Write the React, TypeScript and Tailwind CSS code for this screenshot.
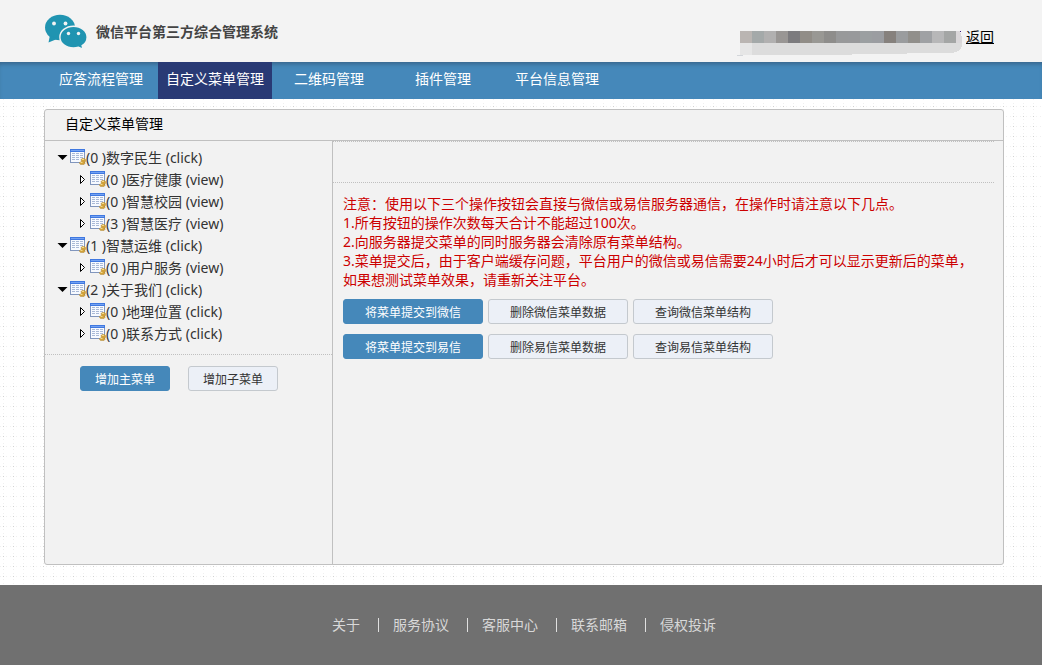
import React from 'react'
import clsx from 'clsx'

const navItems = ['应答流程管理', '自定义菜单管理', '二维码管理', '插件管理', '平台信息管理']

const menus = [
  {
    name: '(0 )数字民生 (click)',
    children: ['(0 )医疗健康 (view)', '(0 )智慧校园 (view)', '(3 )智慧医疗 (view)'],
  },
  { name: '(1 )智慧运维 (click)', children: ['(0 )用户服务 (view)'] },
  { name: '(2 )关于我们 (click)', children: ['(0 )地理位置 (click)', '(0 )联系方式 (click)'] },
]

const actions = [
  ['将菜单提交到微信', '删除微信菜单数据', '查询微信菜单结构'],
  ['将菜单提交到易信', '删除易信菜单数据', '查询易信菜单结构'],
]

const footerLinks = ['关于', '服务协议', '客服中心', '联系邮箱', '侵权投诉']

const maskColors = [
  '#bab5b2', '#a4a9a9', '#b1b0b0', '#999694', '#7c7b7e', '#918d87',
  '#999894', '#8e8d8b', '#98999a', '#98999b', '#9b9fa1', '#9b9da1',
  '#86817d', '#9a9c9e', '#918f8b', '#9fa1a4', '#b7b7b8', '#a4a6a5',
]

function Logo() {
  return (
    <svg width="44" height="36" viewBox="0 0 44 36" className="shrink-0">
      <g fill="#2094b1">
        <ellipse cx="16" cy="13.5" rx="15" ry="12.8" />
        <path d="M6 21 L4.5 28.5 L13 25 Z" />
      </g>
      <path
        d="M29.5 12.2c7.6 0 13.6 4.9 13.6 11 0 3.600-2 6.600-5 8.400l.9 3.600-4.500-2c-1.600.5-3.300.8-5 .8-7.600 0-13.600-4.700-13.600-10.800S21.900 12.200 29.500 12.200z"
        fill="#2094b1"
        stroke="#f3f3f3"
        strokeWidth="1.4"
      />
      <g fill="#f3f3f3">
        <circle cx="10" cy="9.500" r="1.900" />
        <circle cx="21.500" cy="9.500" r="1.900" />
        <circle cx="24.500" cy="19.500" r="1.700" />
        <circle cx="34.500" cy="19.500" r="1.700" />
      </g>
    </svg>
  )
}

function MaskedUser() {
  return (
    <svg width="226" height="26" viewBox="0 0 226 26" shapeRendering="crispEdges" aria-hidden="true">
      <path d="M3 12h222v3c-1 4-5 6-10 7l-90 1-20 1H3z" fill="#dcdcdc" />
      <path d="M3 12h12v12H3z" fill="#e6e6e6" />
      <path d="M0 24h6v1H0z" fill="#d3d6da" />
      <path d="M219 0h4l2 6v6h-6z" fill="#dad7d9" />
      {maskColors.map((color, i) => (
        <rect key={i} x={3 + i * 12} y="0" width="12" height="12" fill={color} />
      ))}
      <path d="M223 0h1v1h-1z" fill="#3a1a78" />
    </svg>
  )
}

function DotGrid() {
  return (
    <svg className="absolute inset-0 h-full w-full" shapeRendering="crispEdges" aria-hidden="true">
      <defs>
        <pattern id="dots" width="10" height="10" patternUnits="userSpaceOnUse">
          <path d="M0 7h1v1H0zM6 7h1v1H6zM3 0h1v1H3zM3 4h1v1H3z" fill="#f0f0f0" />
          <path d="M3 7h1v1H3z" fill="#d2d2d2" />
        </pattern>
      </defs>
      <rect width="100%" height="100%" fill="url(#dots)" />
    </svg>
  )
}

function TableIcon() {
  return (
    <svg width="16" height="18" viewBox="0 0 16 18" className="shrink-0">
      <rect x="0.500" y="0.500" width="14" height="13" fill="#f7faff" stroke="#8196bd" />
      <rect x="0" y="0" width="15" height="3" fill="#3f78e0" />
      <rect x="1" y="1" width="13" height="1" fill="#74a2f2" />
      <path d="M2 4h3v1H2zm4 0h3v1H6zm4 0h3v1h-3zM2 6h3v1H2zm4 0h3v1H6zm4 0h3v1h-3zM2 8h3v1H2zm4 0h3v1H6zm4 0h3v1h-3zM2 10h3v1H2zm4 0h3v1H6z" fill="#a9b9d6" />
      <path d="M11 10.500l1-1h2.500l1 1v2l-1.500 1h1v1l-1 1h-3.500l-1-1v-1l2-1z" fill="#d2a23a" stroke="#b08a3a" strokeWidth="0.500" />
      <path d="M12 10.500h2M10.500 13.500h2" stroke="#f4da8a" />
    </svg>
  )
}

function TreeRow({ name, parent }: { name: string; parent?: boolean }) {
  return (
    <button type="button" className="flex h-[22px] items-center whitespace-pre text-sm text-[#333]">
      <svg width="16" height="16" viewBox="0 0 16 16" className="shrink-0">
        {parent ? (
          <path d="M3.500 5h10L8.500 10z" fill="#000" />
        ) : (
          <path d="M6.500 3.500v8L10.500 7.500z" fill="#fff" stroke="#000" />
        )}
      </svg>
      <TableIcon />
      {name}
    </button>
  )
}

function Button({ children, primary, className }: { children: React.ReactNode; primary?: boolean; className?: string }) {
  return (
    <button
      type="button"
      className={clsx(
        'h-[25px] rounded-[3px] border pt-[2px] text-xs',
        primary ? 'border-[#4588ba] bg-[#4588ba] text-white' : 'border-[#c4c9ce] bg-[#ecf0f7] text-[#333]',
        className
      )}
    >
      {children}
    </button>
  )
}

function App() {
  return (
    <div className="flex min-h-screen flex-col bg-white font-['Noto_Sans','Noto_Sans_CJK_SC',sans-serif] text-sm text-black">
      <header className="flex h-[62px] justify-between bg-[#f3f3f3] pr-12 pl-11">
        <div className="flex items-center gap-2 pt-[2px]">
          <Logo />
          <h1 className="text-sm font-bold text-[#444]">微信平台第三方综合管理系统</h1>
        </div>
        <div className="flex items-start gap-[3px] pt-[31px]">
          <MaskedUser />
          <a href="#" className="leading-3 underline">返回</a>
        </div>
      </header>

      <nav className="flex h-[37px] bg-[#4588ba] pl-11 shadow-[inset_0_4px_4px_-2px_#38658a]">
        {navItems.map((item, i) => (
          <a
            key={item}
            href="#"
            className={clsx('flex w-[114px] items-center justify-center pb-1 text-white', i === 1 && 'bg-[#293a75]')}
          >
            {item}
          </a>
        ))}
      </nav>

      <main className="relative flex flex-1 flex-col pt-[10px] pr-[38px] pb-5 pl-11">
        <DotGrid />
        <section className="relative flex flex-1 flex-col rounded-[3px] border border-[#c0c0c0] bg-[#f2f2f2]">
          <h2 className="h-[31px] border-b border-[#c0c0c0] pl-5 leading-7">自定义菜单管理</h2>
          <div className="flex flex-1">
            <div className="w-[288px] shrink-0 border-r border-[#c0c0c0]">
              <ul className="border-b border-dotted border-[#c0c0c0] pt-[6px] pb-[9px] pl-[9px]">
                {menus.map((menu) => (
                  <li key={menu.name}>
                    <TreeRow name={menu.name} parent />
                    <ul className="pl-5">
                      {menu.children.map((child) => (
                        <li key={child}>
                          <TreeRow name={child} />
                        </li>
                      ))}
                    </ul>
                  </li>
                ))}
              </ul>
              <div className="flex gap-[18px] pt-[11px] pl-[35px]">
                <Button primary className="w-[90px]">增加主菜单</Button>
                <Button className="w-[90px]">增加子菜单</Button>
              </div>
            </div>

            <div className="flex-1 pr-[9px]">
              <div className="h-[42px] border-y border-dotted border-[#c0c0c0]" />
              <div className="pt-[11px] pl-[10px]">
                <div className="leading-[19px] text-[#c00]">
                  <p>注意：使用以下三个操作按钮会直接与微信或易信服务器通信，在操作时请注意以下几点。</p>
                  <p>1.所有按钮的操作次数每天合计不能超过100次。</p>
                  <p>2.向服务器提交菜单的同时服务器会清除原有菜单结构。</p>
                  <p>
                    3.菜单提交后，由于客户端缓存问题，平台用户的微信或易信需要24小时后才可以显示更新后的菜单，
                    <br />
                    如果想测试菜单效果，请重新关注平台。
                  </p>
                </div>
                <div className="flex flex-col gap-[10px] pt-[10px]">
                  {actions.map((row) => (
                    <div key={row[0]} className="flex gap-[5px]">
                      {row.map((label, i) => (
                        <Button key={label} primary={i === 0} className="w-[140px]">
                          {label}
                        </Button>
                      ))}
                    </div>
                  ))}
                </div>
              </div>
            </div>
          </div>
        </section>
      </main>

      <footer className="flex h-20 items-center justify-center bg-[#707070] pl-[6px] text-[#d8d8d8]">
        {footerLinks.map((item, i) => (
          <a
            key={item}
            href="#"
            className={clsx('leading-[14px]', i > 0 && 'ml-[18px] border-l border-[#e0e0e0] pl-[14px]')}
          >
            {item}
          </a>
        ))}
      </footer>
    </div>
  )
}

export default App
